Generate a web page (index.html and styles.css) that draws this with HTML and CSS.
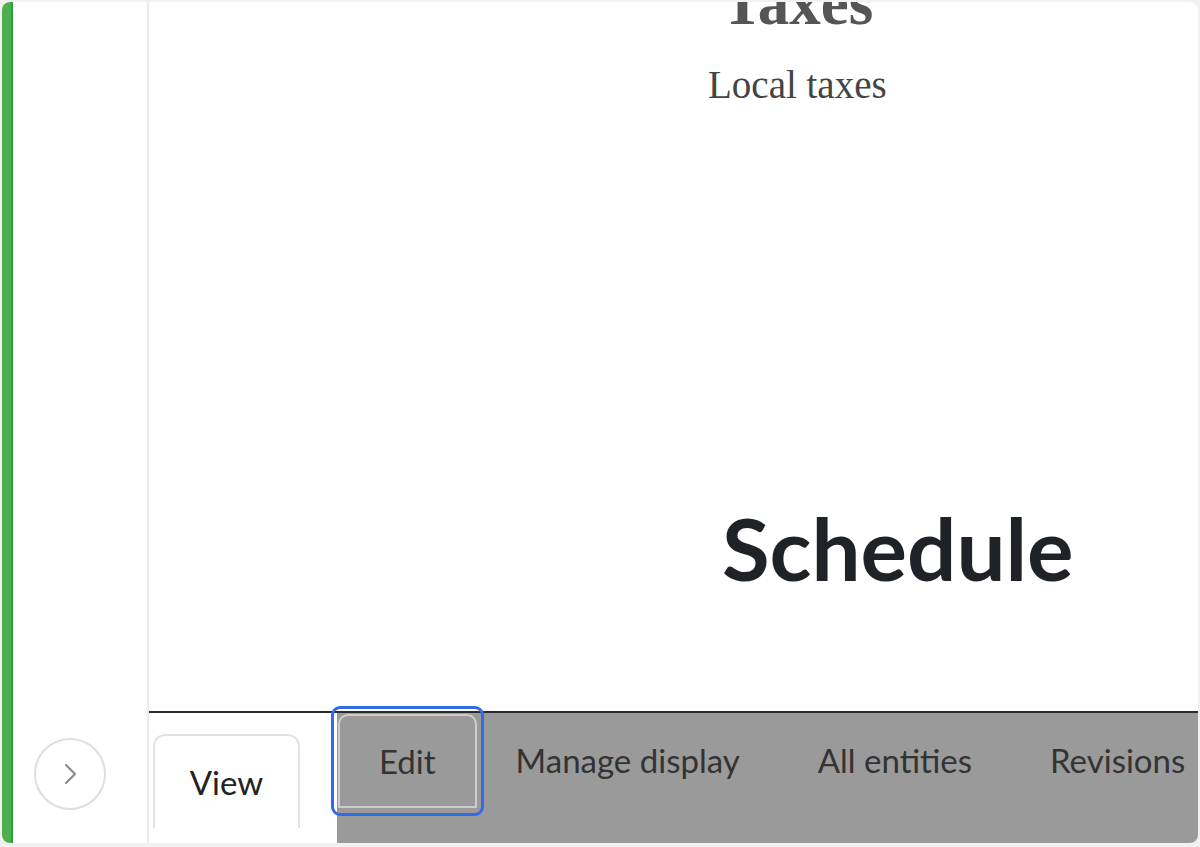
FILE: index.html
```html
<!DOCTYPE html>
<html lang="en">
<head>
<meta charset="utf-8">
<title>Taxes</title>
<link rel="stylesheet" href="styles.css">
</head>
<body>
<div class="window">
  <div class="greenbar"></div>
  <aside class="sidebar">
    <button class="expand" aria-label="Expand">
      <svg width="16" height="22" viewBox="0 0 16 22"><path d="M3 2 L12 11 L3 20" fill="none" stroke="#8a8a8a" stroke-width="2.2" stroke-linecap="round" stroke-linejoin="round"/></svg>
    </button>
  </aside>
  <main class="main">
    <section class="content">
      <div class="doc">
        <div class="hero">
          <h1 class="title">Taxes</h1>
          <p class="subtitle">Local taxes</p>
        </div>
        <h2 class="schedule">Schedule</h2>
      </div>
    </section>
    <nav class="tabbar">
      <div class="tabs-primary">
        <a class="tab-view">View</a>
      </div>
      <div class="tabs-overlay">
        <a class="tab tab-edit">Edit</a>
        <a class="tab">Manage display</a>
        <a class="tab">All entities</a>
        <a class="tab">Revisions</a>
      </div>
    </nav>
  </main>
</div>
</body>
</html>
```

FILE: styles.css
```css
* { box-sizing: border-box; }
html, body { margin: 0; padding: 0; }
body {
  background: #f1f1f1;
  padding: 2px;
  width: 1200px;
  height: 847px;
  overflow: hidden;
}
.window {
  width: 1196px;
  height: 841px;
  background: #fff;
  border-radius: 8px;
  overflow: hidden;
  display: flex;
}
.greenbar {
  width: 11px;
  flex: 0 0 11px;
  background: #4caf50;
  border-right: 2px solid #2f9e3d;
}
.sidebar {
  flex: 0 0 136px;
  border-right: 2px solid #ebebeb;
  display: flex;
  flex-direction: column;
  justify-content: flex-end;
  padding: 0 0 33px 21px;
}
.expand {
  width: 72px;
  height: 72px;
  border-radius: 50%;
  border: 2px solid #dedede;
  background: #fff;
  display: flex;
  align-items: center;
  justify-content: center;
  padding: 0 0 0 2px;
}
.main {
  flex: 1;
  display: flex;
  flex-direction: column;
  min-width: 0;
}
.content {
  flex: 1;
  overflow: hidden;
}
.doc {
  padding-left: 559px;
}
.hero {
  display: inline-block;
  text-align: center;
}
.title {
  margin: -30px 0 0;
  font-family: "Liberation Serif", serif;
  font-weight: 700;
  font-size: 63px;
  line-height: 63px;
  color: #555;
}
.subtitle {
  margin: 30px 0 0;
  font-family: "Liberation Serif", serif;
  font-size: 39px;
  line-height: 39px;
  color: #444;
}
.schedule {
  margin: 400px 0 0 14px;
  font-family: Lato, sans-serif;
  font-weight: 700;
  font-size: 87px;
  line-height: 87px;
  color: #1f2226;
}
.tabbar {
  flex: 0 0 132px;
  border-top: 2px solid #2a2a2a;
  display: flex;
  font-family: Lato, sans-serif;
  font-size: 33px;
}
.tabs-primary {
  flex: 0 0 188px;
  padding: 21px 0 0 4px;
}
.tab-view {
  display: flex;
  align-items: center;
  justify-content: center;
  width: 147px;
  height: 94px;
  border: 2px solid #e0e3e7;
  border-bottom: 0;
  border-radius: 12px 12px 0 0;
  color: #222;
}
.tabs-overlay {
  flex: 1;
  background: #9a9a9a;
  display: flex;
  align-items: flex-start;
  white-space: nowrap;
}
.tab {
  height: 94px;
  display: flex;
  align-items: center;
  padding: 0 39px;
  color: #333;
}
.tab-edit {
  position: relative;
  margin: 1px 0 0 1px;
  border: 2px solid #cdcdcd;
  border-radius: 10px 10px 0 0;
}
.tab-edit::after {
  content: "";
  position: absolute;
  left: -9px;
  right: -9px;
  top: -10px;
  bottom: -10px;
  border: 3px solid #2f6de6;
  border-radius: 9px;
}
```
